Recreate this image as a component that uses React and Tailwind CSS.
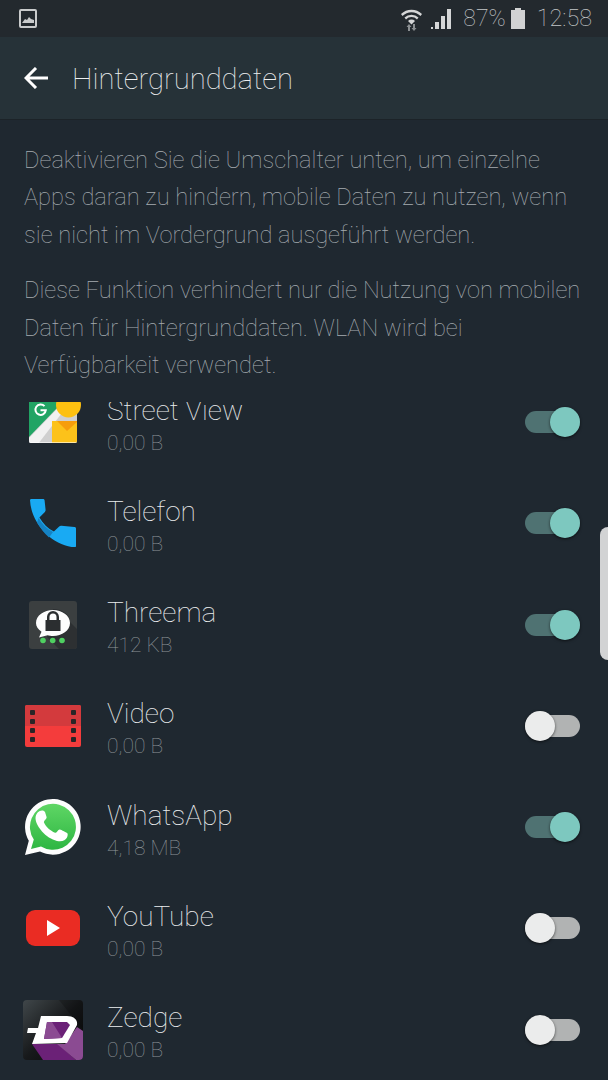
import React from "react";

const StreetView = () => (
  <svg width="48" height="44" viewBox="0 0 48 44" className="overflow-visible">
    <defs>
      <clipPath id="sv"><path d="M0 0h48v41a2 2 0 0 1-2 2H2a2 2 0 0 1-2-2z" /></clipPath>
    </defs>
    <g clipPath="url(#sv)">
      <rect width="48" height="44" fill="#cfcfcf" />
      <path d="M0 0h30v6L0 37z" fill="#21a464" />
      <path d="M0 38L28 9h8L9 44H0z" fill="#f1f1f1" />
      <path d="M23 21h25v23H23z" fill="#fcc21a" />
      <path d="M28 21h20v1l-10 9z" fill="#f69d0c" />
      <path d="M0 42h48v2H0z" fill="#ffffff" opacity=".6" />
    </g>
    <circle cx="39.500" cy="5" r="12.500" fill="#fdc010" />
    <path d="M15.500 6.200a5.200 5.200 0 1 0 1.300 4H11.500" fill="none" stroke="#fff" strokeWidth="2" />
  </svg>
);

const Phone = () => (
  <svg width="48" height="48" viewBox="0 0 48 48">
    <path d="M1 1c0-1 1-1 2-1h11c1 0 1.500.5 1.600 1.500l1 9.500c0 1-.5 1.800-1.200 2.500l-5 5c3.500 6 8.500 11 14.500 14l5-4.700c.8-.7 1.500-1.200 2.500-1.100l13 1.300c1 0 1.600.6 1.600 1.600V47c0 1-.6 1.400-1.500 1.300C24 47 2 25 1 1z" fill="#19aaf3" />
    <path d="M9.500 19c3.500 6 8.500 11 14.500 14l-4 5.500C15 34 11 28.500 8 23.500z" fill="#1583c4" />
  </svg>
);

const Threema = () => (
  <svg width="48" height="48" viewBox="0 0 48 48">
    <rect width="48" height="48" rx="3" fill="#3b3f40" />
    <path d="M24 8c10 0 17 6 17 13l7 7v17a3 3 0 0 1-3 3H30l-12-12z" fill="#2d3032" />
    <path d="M24 9c9 0 17 5.500 17 13s-8 13-17 13c-2 0-4-.3-5.500-.8L10 36.500l2.500-5.700C9 28 7 25.500 7 22 7 14.500 15 9 24 9z" fill="#fdfdfd" />
    <path d="M18 19v-3a6 6 0 0 1 12 0v3h1.500v11h-15V19zm2.500 0h7v-3a3.500 3.500 0 0 0-7 0z" fill="#2b2e30" />
    <circle cx="14" cy="39.500" r="2.800" fill="#4fd061" />
    <circle cx="23.700" cy="39.500" r="2.800" fill="#4fd061" />
    <circle cx="33" cy="39.500" r="2.800" fill="#4fd061" />
  </svg>
);

const Video = () => (
  <svg width="56" height="42" viewBox="0 0 56 42">
    <rect width="56" height="42" rx="2" fill="#f43c3c" />
    <path d="M2 0h52a2 2 0 0 1 2 2v19H0V2a2 2 0 0 1 2-2z" fill="#d33a3d" />
    {[5, 14, 23, 32].map((y) => (
      <g key={y} fill="#2a2527">
        <rect x="5" y={y} width="5" height="5" rx="1" />
        <rect x="46" y={y} width="5" height="5" rx="1" />
      </g>
    ))}
  </svg>
);

const WhatsApp = () => (
  <svg width="56" height="56" viewBox="0 0 56 56">
    <defs>
      <linearGradient id="wa" x1="0" y1="0" x2="0" y2="1">
        <stop offset="0" stopColor="#5fd665" />
        <stop offset="1" stopColor="#2db642" />
      </linearGradient>
    </defs>
    <path d="M0 56l3.800-14.200A27.800 27.800 0 1 1 15 52.500z" fill="#fdfdfd" />
    <path d="M6 50l2.800-9.400A23 23 0 1 1 16 47.500z" fill="url(#wa)" />
    <path d="M20 13c-1-1.500-2-1.500-3-1.500-3 0-6.500 3-6.500 7.500 0 5 3.500 10 6.500 13.500 4 4.500 9.500 8 15 9.500 5 1 8.500-.5 10-3.500.8-1.800.8-3.500.5-4-.5-.8-6.500-3.800-7.500-4-1-.3-1.500.3-3 2.300-.8 1-1.300 1.300-2.500.8-3-1.300-8.500-5-10.500-10-.3-.8 0-1.200 1.500-3 1-1.300 1.300-1.800 1-2.800z" fill="#fff" />
  </svg>
);

const YouTube = () => (
  <svg width="54" height="36" viewBox="0 0 54 36">
    <rect width="54" height="36" rx="9" fill="#ea2c23" />
    <path d="M21 10l13 8-13 8z" fill="#fff" />
  </svg>
);

const Zedge = () => (
  <svg width="60" height="60" viewBox="0 0 60 60">
    <defs>
      <linearGradient id="zg" x1="0" y1="0" x2="1" y2="1">
        <stop offset="0" stopColor="#40474a" />
        <stop offset=".5" stopColor="#17191b" />
        <stop offset="1" stopColor="#060606" />
      </linearGradient>
      <clipPath id="zc"><rect width="60" height="60" rx="4" /></clipPath>
    </defs>
    <g clipPath="url(#zc)">
      <rect width="60" height="60" fill="url(#zg)" />
      <path d="M36 0h24v30z" fill="#000" opacity=".2" />
      <path d="M9 44h26l18 16H20z" fill="#6b2177" />
      <path d="M54 27l6 4v29h-7L34 44h8z" fill="#8b4b92" />
      <path d="M18 16h26c7 0 11 4 10 9L44 43 9 44l4-11H4l1-5h10z" fill="#fff" />
      <path d="M24 22h20l3 3-8 13-18 1z" fill="#6b2177" />
      <path d="M24 22h5l10 16-18 1z" fill="#8b4b92" />
    </g>
  </svg>
);

const Toggle = ({ on }) => (
  <div className={`relative h-[22px] w-[55px] rounded-full ${on ? "bg-[#4f7272]" : "bg-[#b1b3b3]"}`}>
    <div
      className={`absolute top-[-4px] h-[30px] w-[30px] rounded-full shadow-[0_1px_3px_rgba(0,0,0,0.6)] ${
        on ? "right-0 bg-[#7dc8bf]" : "left-0 bg-[#ebecec]"
      }`}
    />
  </div>
);

const apps = [
  { name: "Street View", size: "0,00 B", on: true, icon: <StreetView /> },
  { name: "Telefon", size: "0,00 B", on: true, icon: <Phone /> },
  { name: "Threema", size: "412 KB", on: true, icon: <Threema /> },
  { name: "Video", size: "0,00 B", on: false, icon: <Video /> },
  { name: "WhatsApp", size: "4,18 MB", on: true, icon: <WhatsApp /> },
  { name: "YouTube", size: "0,00 B", on: false, icon: <YouTube /> },
  { name: "Zedge", size: "0,00 B", on: false, icon: <Zedge /> },
];

const App = () => {
  return (
    <div className="relative flex h-[1080px] w-[608px] flex-col overflow-hidden bg-[#1f2830] font-['Roboto',sans-serif]">
      {/* status bar */}
      <div className="flex h-[37px] shrink-0 items-center justify-between bg-[#23292e] pl-[19px] pr-[16px]">
        <svg width="18" height="19" viewBox="0 0 18 19">
          <rect x="1" y="1" width="16" height="17" rx="1" fill="none" stroke="#c9cbcc" strokeWidth="2" />
          <path d="M3 14l3-4 2 1 2-3 2 2 3 1v3z" fill="#c9cbcc" />
        </svg>
        <div className="flex items-center">
          <svg width="21" height="24" viewBox="0 0 21 24" className="mr-[9px]">
            <path d="M0 7a15 15 0 0 1 21 0l-1.500 2a12.500 12.500 0 0 0-18 0z" fill="#d5d6d7" />
            <path d="M3.500 10.500a10 10 0 0 1 14 0L16 12.500a7.500 7.500 0 0 0-11 0z" fill="#d5d6d7" />
            <path d="M7 14a5 5 0 0 1 7 0l-3.500 3.500z" fill="#d5d6d7" />
            <path d="M7 24v-4H5.500l2.500-3 2.500 3H9v4zM12 17v4h-1.500l2.500 3 2.500-3H14v-4z" fill="#8b8f92" />
          </svg>
          <svg width="20" height="20" viewBox="0 0 20 20" className="mr-[12px]">
            <path d="M0 20h2v-2H0zM4 20h4v-7H4zM10 20h4V7h-4zM16 20h4V0h-4z" fill="#d5d6d7" />
          </svg>
          <span className="text-[23px] font-thin leading-none text-[#c4c7c9]">87%</span>
          <svg width="14" height="21" viewBox="0 0 14 21" className="ml-[5px] mr-[12px]">
            <path d="M4 0h6v2h4v19H0V2h4z" fill="#d1d2d3" />
          </svg>
          <span className="text-[23.4px] font-thin leading-none text-[#c4c7c9]">12:58</span>
        </div>
      </div>

      {/* header */}
      <div className="flex h-[83px] shrink-0 items-center border-b border-[#1c2328] bg-[#263238] pl-[24px]">
        <svg width="24" height="22" viewBox="0 0 24 22" fill="none" stroke="#fff" strokeWidth="3">
          <path d="M24 11H2M12 1L2 11l10 10" />
        </svg>
        <h1 className="ml-[24px] mt-[4px] text-[29.2px] font-thin text-[#eceeef]">Hintergrunddaten</h1>
      </div>

      {/* description */}
      <div className="shrink-0 px-[24px] pt-[22px] text-[23.65px] font-thin leading-[37.4px] text-[#a6acb0]">
        <p className="whitespace-nowrap">
          Deaktivieren Sie die Umschalter unten, um einzelne
          <br />
          Apps daran zu hindern, mobile Daten zu nutzen, wenn
          <br />
          sie nicht im Vordergrund ausgeführt werden.
        </p>
        <p className="mt-[18px] whitespace-nowrap">
          Diese Funktion verhindert nur die Nutzung von mobilen
          <br />
          Daten für Hintergrunddaten. WLAN wird bei
          <br />
          Verfügbarkeit verwendet.
        </p>
      </div>

      {/* app list, scrolled so the first row is cut off */}
      <div className="mt-[17.6px] min-h-0 flex-1 overflow-hidden">
        <div className="-mt-[30.5px] flex flex-col">
          {apps.map((app) => (
            <div key={app.name} className="flex h-[101.25px] items-center pl-[23px] pr-[28px]">
              <div className="flex w-[60px] justify-center">{app.icon}</div>
              <div className="ml-[24px] flex-1 pt-[7px]">
                <div className="text-[28px] font-thin leading-[34px] text-[#eceeef]">{app.name}</div>
                <div className="text-[21px] font-thin leading-[30px] text-[#8f969a]">{app.size}</div>
              </div>
              <Toggle on={app.on} />
            </div>
          ))}
        </div>
      </div>

      {/* edge panel handle */}
      <div className="absolute right-0 top-[527px] h-[133px] w-[8px] rounded-l-[8px] bg-[#d2d3d4]" />
    </div>
  );
};

export default App;
